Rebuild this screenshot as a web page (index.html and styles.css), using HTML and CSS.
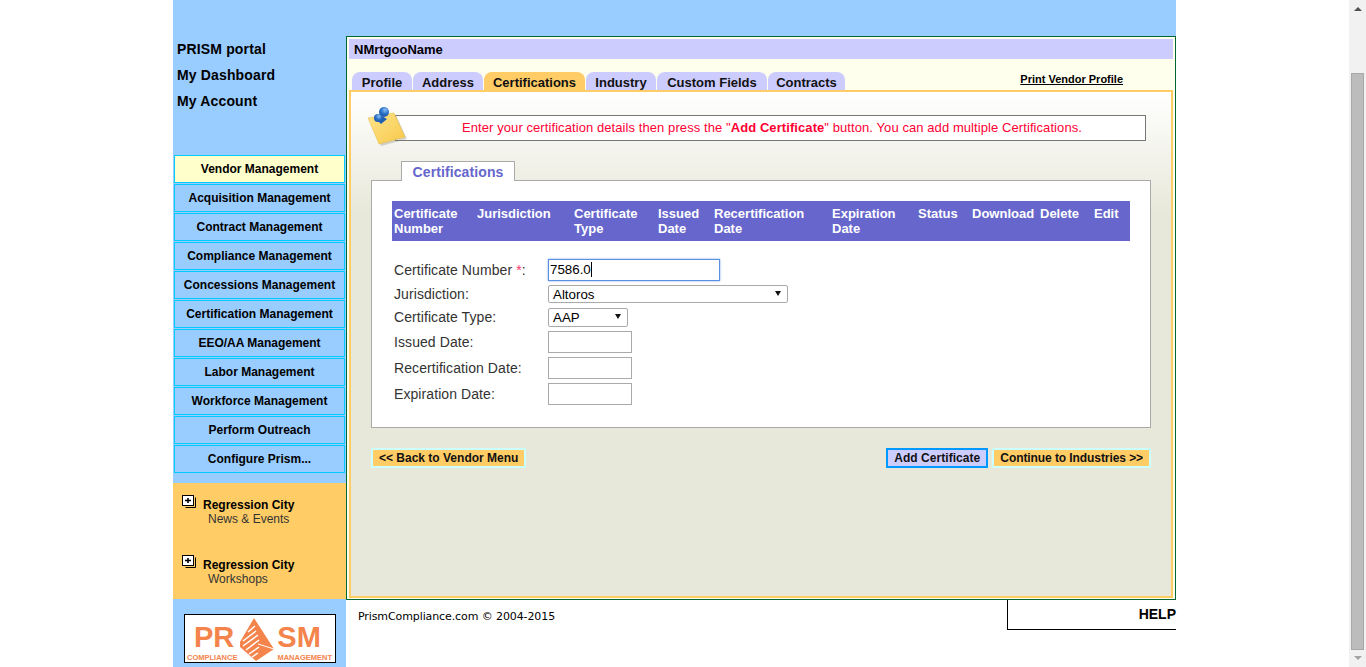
FILE: index.html
```html
<!DOCTYPE html>
<html lang="en">
<head>
    <meta charset="UTF-8">
    <title>PRISM portal</title>
    <link rel="stylesheet" href="styles.css">
</head>
<body>
<div class="page">
    <div class="top-band"></div>
    <div class="main-row">
        <div class="side">
            <ul class="side-links">
                <li>PRISM portal</li>
                <li>My Dashboard</li>
                <li>My Account</li>
            </ul>
            <div class="side-menu">
                <a class="side-btn current">Vendor Management</a>
                <a class="side-btn">Acquisition Management</a>
                <a class="side-btn">Contract Management</a>
                <a class="side-btn">Compliance Management</a>
                <a class="side-btn">Concessions Management</a>
                <a class="side-btn">Certification Management</a>
                <a class="side-btn">EEO/AA Management</a>
                <a class="side-btn">Labor Management</a>
                <a class="side-btn">Workforce Management</a>
                <a class="side-btn">Perform Outreach</a>
                <a class="side-btn">Configure Prism...</a>
            </div>
            <div class="side-news">
                <div class="news-item">
                    <svg class="plus-icon" width="14" height="14" viewBox="0 0 14 14">
                        <path d="M3.5 12.5h10v-10" fill="none" stroke="#000"/>
                        <rect x="0.5" y="0.5" width="11" height="10" fill="#fff" stroke="#000"/>
                        <path d="M3 5.5h6M6 3v5" stroke="#000" stroke-width="1.6"/>
                    </svg>
                    <div class="news-text"><b>Regression City</b><span>News &amp; Events</span></div>
                </div>
                <div class="news-item">
                    <svg class="plus-icon" width="14" height="14" viewBox="0 0 14 14">
                        <path d="M3.5 12.5h10v-10" fill="none" stroke="#000"/>
                        <rect x="0.5" y="0.5" width="11" height="10" fill="#fff" stroke="#000"/>
                        <path d="M3 5.5h6M6 3v5" stroke="#000" stroke-width="1.6"/>
                    </svg>
                    <div class="news-text"><b>Regression City</b><span>Workshops</span></div>
                </div>
            </div>
            <div class="side-logo">
                <div class="logo-box">
                    <div class="logo-big">
                        <span>PR</span>
                        <svg width="36" height="44" viewBox="0 0 36 44">
                            <path d="M14 0L34 31L16 43L0 29L0 24Z" fill="#f4844c"/>
                            <path d="M8 14L15 8M3 23L16 13M3 28L18 17M6 32L19 22M9 36L19 29M12 39L18 35" fill="none" stroke="#fff" stroke-width="1.5"/>
                            <path d="M18 26L34 31" stroke="#fff" stroke-width="1"/>
                        </svg>
                        <span>SM</span>
                    </div>
                    <div class="logo-small"><span>COMPLIANCE</span><span>MANAGEMENT</span></div>
                </div>
            </div>
        </div>
        <div class="content">
            <div class="frame">
                <div class="vendor-name">NMrtgooName</div>
                <div class="tab-row">
                    <div class="tabs">
                        <a class="tab">Profile</a>
                        <a class="tab">Address</a>
                        <a class="tab active">Certifications</a>
                        <a class="tab">Industry</a>
                        <a class="tab">Custom Fields</a>
                        <a class="tab">Contracts</a>
                    </div>
                    <a class="print-link">Print Vendor Profile</a>
                </div>
                <div class="panel">
                    <div class="note">
                        <svg class="note-icon" width="44" height="44" viewBox="0 0 44 44">
                            <defs>
                                <linearGradient id="paper" x1="0" y1="0" x2="1" y2="1">
                                    <stop offset="0" stop-color="#fde58c"/>
                                    <stop offset="1" stop-color="#f8c84a"/>
                                </linearGradient>
                                <radialGradient id="pin" cx="0.6" cy="0.3" r="0.8">
                                    <stop offset="0" stop-color="#8cc0f0"/>
                                    <stop offset="0.5" stop-color="#2a70c8"/>
                                    <stop offset="1" stop-color="#174f9c"/>
                                </radialGradient>
                            </defs>
                            <path d="M3 15L29 10L40 34L14 41Z" fill="#77776c" opacity="0.3"/>
                            <path d="M1 13L27 8L38 32L12 39Z" fill="url(#paper)" stroke="#e6b93f" stroke-width="0.5"/>
                            <path d="M11 9L20 14L14 19L8 13Z" fill="#1f5fb4"/>
                            <circle cx="17" cy="7" r="5" fill="url(#pin)"/>
                            <circle cx="11" cy="13" r="4" fill="url(#pin)"/>
                        </svg>
                        <div class="note-text">Enter your certification details then press the "<b>Add Certificate</b>" button. You can add multiple Certifications.</div>
                    </div>
                    <div class="sub-tab">Certifications</div>
                    <div class="cert-box">
                        <div class="cert-head">
                            <div>Certificate Number</div>
                            <div>Jurisdiction</div>
                            <div>Certificate Type</div>
                            <div>Issued Date</div>
                            <div>Recertification Date</div>
                            <div>Expiration Date</div>
                            <div>Status</div>
                            <div>Download</div>
                            <div>Delete</div>
                            <div>Edit</div>
                        </div>
                        <div class="cert-form">
                            <label>Certificate Number <i>*</i>:</label>
                            <div class="input-field focus">7586.0<span class="caret"></span></div>
                            <label class="row-sel">Jurisdiction:</label>
                            <div class="select-field wide">Altoros<span class="arrow"></span></div>
                            <label class="row-sel">Certificate Type:</label>
                            <div class="select-field narrow">AAP<span class="arrow"></span></div>
                            <label>Issued Date:</label>
                            <div class="input-field date"></div>
                            <label>Recertification Date:</label>
                            <div class="input-field date"></div>
                            <label>Expiration Date:</label>
                            <div class="input-field date"></div>
                        </div>
                    </div>
                    <div class="actions">
                        <a class="action-btn">&lt;&lt; Back to Vendor Menu</a>
                        <div class="actions-right">
                            <a class="action-btn add">Add Certificate</a>
                            <a class="action-btn next">Continue to Industries &gt;&gt;</a>
                        </div>
                    </div>
                </div>
            </div>
            <div class="foot">
                <div class="copyright">PrismCompliance.com © 2004-2015</div>
                <div class="help">HELP</div>
            </div>
        </div>
    </div>
</div>
<div class="scrollbar">
    <div class="scroll-up"></div>
    <div class="scroll-thumb"></div>
    <div class="scroll-down"></div>
</div>
</body>
</html>
```

FILE: styles.css
```css
html, body {
    margin: 0;
    padding: 0;
    height: 667px;
    overflow: hidden;
    background-color: #fff;
}

body {
    font-family: "Liberation Sans", Arial, sans-serif;
    font-size: 14px;
    color: #000;
}

.page {
    width: 1003px;
    margin-left: 173px;
}

.top-band {
    height: 36px;
    background-color: #99ccff;
}

.main-row {
    display: flex;
}

/* left column */
.side {
    width: 173px;
    background-color: #99ccff;
}

.side-links {
    list-style: none;
    margin: 0;
    padding: 4px 0 0 4px;
    height: 116px;
    box-sizing: border-box;
}

.side-links li {
    height: 26px;
    line-height: 18px;
    font-weight: bold;
    letter-spacing: 0.15px;
}

.side-menu {
    margin-top: 3px;
    padding-left: 1px;
    display: flex;
    flex-direction: column;
    gap: 1px;
}

.side-btn {
    width: 171px;
    height: 28px;
    box-sizing: border-box;
    border: 1px solid #00ccff;
    font-size: 12px;
    font-weight: bold;
    line-height: 26px;
    text-align: center;
}

.side-btn.current {
    background-color: #ffffcc;
}

.side-news {
    margin-top: 10px;
    height: 116px;
    padding-top: 12px;
    box-sizing: border-box;
    background-color: #ffcc66;
}

.news-item {
    display: flex;
    height: 60px;
    padding-left: 9px;
}

.plus-icon {
    flex: none;
}

.news-text {
    margin-left: 7px;
    padding-top: 2px;
    margin-top: 1px;
    font-size: 12px;
    line-height: 14px;
}

.news-text span {
    display: block;
    padding-left: 5px;
    color: #333;
}

.side-logo {
    height: 68px;
    padding: 15px 0 0 11px;
    box-sizing: border-box;
}

.logo-box {
    width: 152px;
    height: 49px;
    box-sizing: border-box;
    border: 1px solid #000;
    background-color: #fff;
    color: #f4844c;
    position: relative;
    overflow: hidden;
}

.logo-big {
    display: flex;
    align-items: flex-start;
    height: 37px;
    padding-left: 9px;
    font-size: 29px;
    font-weight: bold;
    line-height: 24px;
}

.logo-big span {
    margin-top: 10px;
}

.logo-big svg {
    flex: none;
    margin: 3px 1px 0 6px;
}

.logo-small {
    position: absolute;
    left: 2px;
    right: 3px;
    bottom: 0;
    display: flex;
    justify-content: space-between;
    font-size: 7.5px;
    font-weight: bold;
    line-height: 8px;
}

/* right column */
.content {
    width: 830px;
}

.frame {
    height: 564px;
    box-sizing: border-box;
    border: 1px solid #006633;
    padding: 2px 2px 1px 2px;
    background-color: #ffffee;
    display: flex;
    flex-direction: column;
}

.vendor-name {
    height: 20px;
    background-color: #ccccff;
    font-size: 13px;
    font-weight: bold;
    line-height: 21px;
    padding-left: 5px;
}

.tab-row {
    height: 31px;
    display: flex;
    justify-content: space-between;
    padding-left: 3px;
}

.tabs {
    display: grid;
    grid-template-columns: 60px 70px 101px 70px 110px 77px;
    gap: 1px;
    align-items: end;
}

.tab {
    height: 18px;
    line-height: 21px;
    text-align: center;
    background-color: #ccccff;
    border-radius: 8px 8px 0 0;
    font-size: 13px;
    font-weight: bold;
    color: #111;
}

.tab.active {
    background-color: #ffcc66;
}

.print-link {
    margin: 13px 50px 0 0;
    font-size: 11px;
    font-weight: bold;
    text-decoration: underline;
    line-height: 14px;
}

.panel {
    flex: 1;
    border: 2px solid #ffcc66;
    background: linear-gradient(#fff 0, #e8e8da 120px, #e8e8da 100%);
    padding: 0 20px;
}

/* note with pin */
.note {
    position: relative;
    margin: 23px 5px 0 24px;
    height: 26px;
    box-sizing: border-box;
    border: 1px solid #777;
    background-color: #fff;
    text-align: center;
    line-height: 24px;
    font-size: 13px;
    letter-spacing: 0.08px;
    color: #ff0033;
}

.note-text {
    padding-left: 3px;
}

.note-icon {
    position: absolute;
    left: -29px;
    top: -11px;
}

.sub-tab {
    width: 114px;
    height: 20px;
    box-sizing: border-box;
    margin: 20px 0 -1px 30px;
    position: relative;
    border: 1px solid #aaa;
    border-bottom: 0;
    background-color: #fff;
    color: #6666cc;
    font-size: 14px;
    font-weight: bold;
    line-height: 20px;
    letter-spacing: 0.1px;
    text-align: center;
}

.cert-box {
    height: 248px;
    box-sizing: border-box;
    border: 1px solid #aaa;
    background-color: #fff;
    padding: 20px;
}

.cert-head {
    height: 40px;
    background-color: #6666cc;
    color: #fff;
    font-size: 13px;
    font-weight: bold;
    line-height: 15px;
    display: grid;
    grid-template-columns: 83px 97px 84px 56px 118px 86px 54px 68px 54px 38px;
    padding: 5px 0 0 2px;
    box-sizing: border-box;
}

.cert-form {
    display: grid;
    grid-template-columns: 154px 1fr;
    grid-template-rows: 26px 23px 23px 26px 26px 22px;
    margin: 18px 0 0 2px;
    font-size: 14px;
    line-height: 22px;
    align-items: start;
    justify-items: start;
    letter-spacing: 0.08px;
    color: #333;
}

.cert-form .row-sel {
    line-height: 18px;
}

.cert-form i {
    font-style: normal;
    color: #ff3366;
}

.input-field,
.select-field {
    box-sizing: border-box;
    border: 1px solid #aaa;
    background-color: #fff;
    font-size: 13.3333px;
    letter-spacing: 0;
    color: #000;
}

.input-field {
    height: 22px;
    line-height: 20px;
    padding-left: 1px;
}

.input-field.focus {
    width: 172px;
    border-color: #5b8fe0;
    box-shadow: 0 0 2px #7aa7ea;
}

.input-field.date {
    width: 84px;
}

.caret {
    display: inline-block;
    width: 1px;
    height: 15px;
    background-color: #000;
    vertical-align: -3px;
}

.select-field {
    height: 18px;
    border-radius: 2px;
    line-height: 17px;
    padding-left: 4px;
    position: relative;
}

.select-field.wide {
    width: 240px;
}

.select-field.narrow {
    width: 80px;
    height: 19px;
}

.arrow {
    position: absolute;
    right: 6px;
    top: 5px;
    border-left: 3.5px solid transparent;
    border-right: 3.5px solid transparent;
    border-top: 5px solid #111;
}

.actions {
    display: flex;
    justify-content: space-between;
    margin-top: 20px;
}

.actions-right {
    display: flex;
    gap: 4px;
}

.action-btn {
    height: 20px;
    box-sizing: border-box;
    border: 2px solid #ccffff;
    background-color: #ffcc66;
    font-size: 12px;
    font-weight: bold;
    line-height: 16px;
    padding: 0 6px;
    color: #111;
}

.action-btn.add {
    border-color: #0099ff;
    background-color: #ccccff;
    letter-spacing: 0.05px;
}

.action-btn.next {
    letter-spacing: -0.08px;
}

.foot {
    display: flex;
    justify-content: space-between;
    height: 30px;
}

.copyright {
    padding: 10px 0 0 12px;
    font-family: "DejaVu Sans", sans-serif;
    font-size: 11px;
    letter-spacing: -0.1px;
    line-height: 14px;
}

.help {
    width: 169px;
    height: 30px;
    box-sizing: border-box;
    border-left: 1px solid #000;
    border-bottom: 1px solid #000;
    text-align: right;
    font-weight: bold;
    line-height: 28px;
}

/* browser scrollbar in the shot */
.scrollbar {
    position: absolute;
    left: 1349px;
    top: 0;
    width: 17px;
    height: 667px;
    background-color: #f1f1f1;
}

.scroll-up {
    position: absolute;
    left: 5px;
    top: 7px;
    border-left: 4px solid transparent;
    border-right: 4px solid transparent;
    border-bottom: 4px solid #505050;
}

.scroll-thumb {
    position: absolute;
    left: 2px;
    top: 73px;
    width: 13px;
    height: 577px;
    box-sizing: border-box;
    border: 1px solid #a8a8a8;
    background-color: #bcbcbc;
}

.scroll-down {
    position: absolute;
    left: 5px;
    top: 656px;
    border-left: 4px solid transparent;
    border-right: 4px solid transparent;
    border-top: 4px solid #a3a3a3;
}
```
